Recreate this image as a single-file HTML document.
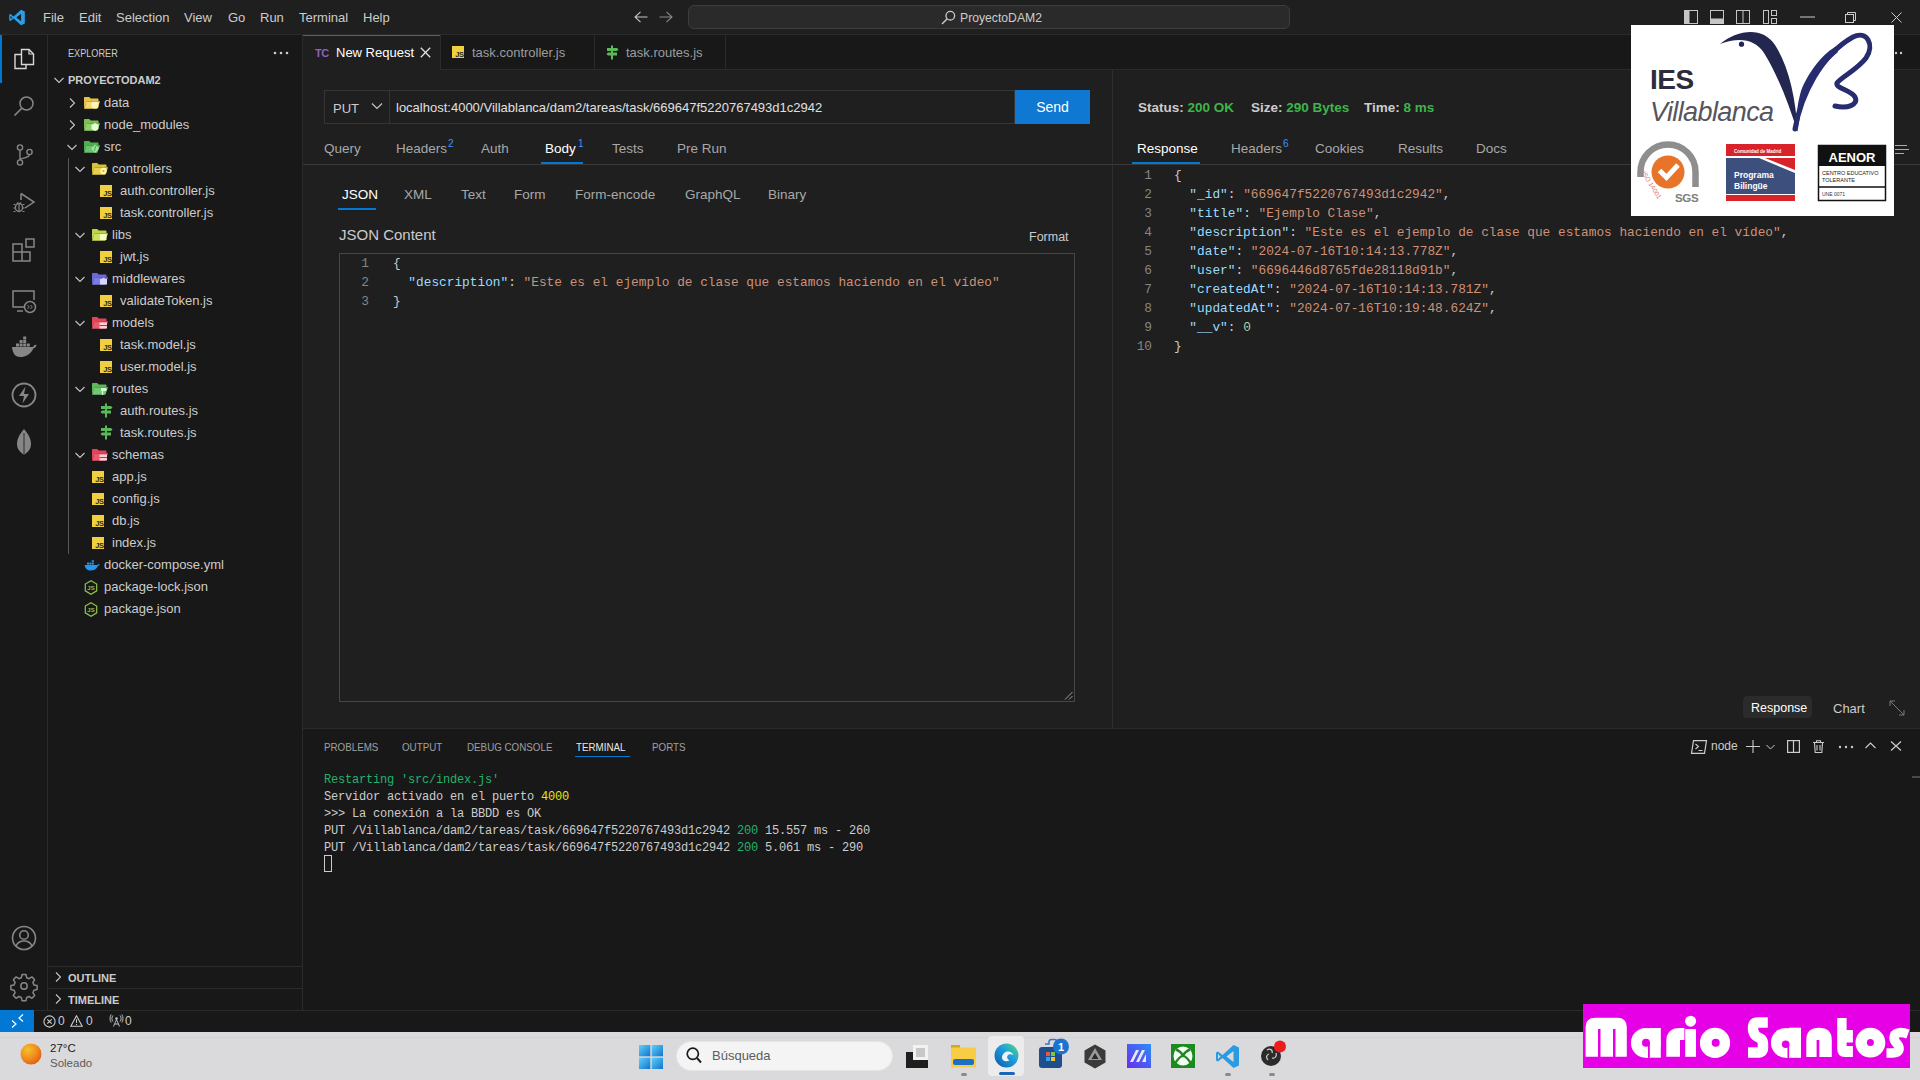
<!DOCTYPE html>
<html><head><meta charset="utf-8">
<style>
*{box-sizing:border-box;margin:0;padding:0}
html,body{width:1920px;height:1080px;overflow:hidden;background:#1f1f1f;font-family:"Liberation Sans",sans-serif;color:#cccccc}
.a{position:absolute}
.mono{font-family:"Liberation Mono",monospace}
svg{position:absolute;overflow:visible}
/* regions */
#title{left:0;top:0;width:1920px;height:35px;background:#1f1f1f;border-bottom:1px solid #2b2b2b}
#act{left:0;top:35px;width:48px;height:975px;background:#181818;border-right:1px solid #2b2b2b}
#side{left:48px;top:35px;width:255px;height:975px;background:#181818;border-right:1px solid #2b2b2b}
#tabs{left:303px;top:35px;width:1617px;height:35px;background:#181818;border-bottom:1px solid #2b2b2b}
#editor{left:303px;top:70px;width:1617px;height:658px;background:#1f1f1f}
#panel{left:303px;top:728px;width:1617px;height:282px;background:#181818;border-top:1px solid #2b2b2b}
#status{left:0;top:1010px;width:1920px;height:22px;background:#181818;border-top:1px solid #2b2b2b}
#taskbar{left:0;top:1032px;width:1920px;height:48px;background:#dadadc}
.menu{top:10px;font-size:13px;color:#cccccc;white-space:nowrap}
.row{position:absolute;left:48px;width:254px;height:22px;font-size:13px;line-height:22px;color:#cccccc;white-space:nowrap}
.row span{position:absolute;top:0}
</style></head><body>

<!-- TITLE BAR -->
<div id="title" class="a">
<svg style="left:8px;top:9px" width="18" height="17" viewBox="0 0 100 100"><path d="M74 4 L96 14 V86 L74 96 L30 56 L12 70 L4 66 V34 L12 30 L30 44 Z M74 28 L46 50 L74 72 Z M12 40 V60 L22 50 Z" fill="#2b9fe6" fill-rule="evenodd"/></svg>
<div class="a menu" style="left:43px">File</div>
<div class="a menu" style="left:79px">Edit</div>
<div class="a menu" style="left:116px">Selection</div>
<div class="a menu" style="left:184px">View</div>
<div class="a menu" style="left:228px">Go</div>
<div class="a menu" style="left:260px">Run</div>
<div class="a menu" style="left:299px">Terminal</div>
<div class="a menu" style="left:363px">Help</div>
<svg style="left:634px;top:11px" width="14" height="12" viewBox="0 0 14 12"><path d="M13.5 6H1M6.5 0.8L1 6l5.5 5.2" stroke="#c5c5c5" stroke-width="1.1" fill="none"/></svg>
<svg style="left:659px;top:11px" width="14" height="12" viewBox="0 0 14 12"><path d="M0.5 6H13M7.5 0.8L13 6l-5.5 5.2" stroke="#8a8a8a" stroke-width="1.1" fill="none"/></svg>
<div class="a" style="left:688px;top:5px;width:602px;height:24px;border-radius:6px;background:#2a2a2a;border:1px solid #3d3d3d"></div>
<svg style="left:941px;top:10px" width="15" height="15" viewBox="0 0 15 15"><circle cx="9.3" cy="5.7" r="4.3" stroke="#c8c8c8" stroke-width="1.3" fill="none"/><path d="M6.2 8.8L1 14" stroke="#c8c8c8" stroke-width="1.5"/></svg>
<div class="a" style="left:960px;top:11px;font-size:12.2px;color:#cccccc">ProyectoDAM2</div>
<svg style="left:1684px;top:10px" width="14" height="14" viewBox="0 0 14 14"><rect x="0.5" y="0.5" width="13" height="13" fill="none" stroke="#c5c5c5"/><rect x="0.5" y="0.5" width="5" height="13" fill="#c5c5c5"/></svg>
<svg style="left:1710px;top:10px" width="14" height="14" viewBox="0 0 14 14"><rect x="0.5" y="0.5" width="13" height="13" fill="none" stroke="#c5c5c5"/><rect x="0.5" y="8.5" width="13" height="5" fill="#c5c5c5"/></svg>
<svg style="left:1736px;top:10px" width="14" height="14" viewBox="0 0 14 14"><rect x="0.5" y="0.5" width="13" height="13" fill="none" stroke="#c5c5c5"/><path d="M7 0.5V13.5" stroke="#c5c5c5"/></svg>
<svg style="left:1763px;top:10px" width="14" height="14" viewBox="0 0 14 14"><rect x="0.5" y="0.5" width="5" height="13" fill="none" stroke="#c5c5c5"/><rect x="8.5" y="0.5" width="5" height="5" fill="none" stroke="#c5c5c5"/><rect x="8.5" y="8.5" width="5" height="5" fill="none" stroke="#c5c5c5"/></svg>
<svg style="left:1800px;top:16px" width="15" height="2" viewBox="0 0 15 2"><path d="M0 1H15" stroke="#cccccc" stroke-width="1"/></svg>
<svg style="left:1845px;top:12px" width="11" height="11" viewBox="0 0 11 11"><rect x="0.5" y="2.5" width="8" height="8" fill="none" stroke="#cccccc"/><path d="M2.5 2.5V0.5H10.5V8.5H8.5" fill="none" stroke="#cccccc"/></svg>
<svg style="left:1891px;top:12px" width="11" height="11" viewBox="0 0 11 11"><path d="M0.5 0.5L10.5 10.5M10.5 0.5L0.5 10.5" stroke="#cccccc" stroke-width="1"/></svg>
</div>

<!-- ACTIVITY BAR -->
<div id="act" class="a"></div>
<div class="a" style="left:0;top:35px;width:2px;height:48px;background:#0078d4"></div>
<svg style="left:12px;top:47px" width="24" height="24" viewBox="0 0 24 24"><path d="M9.5 2.5h7.5l4.5 4.5v10.5h-12z" fill="none" stroke="#d7d7d7" stroke-width="1.4"/><path d="M17 2.5v4.5h4.5" fill="none" stroke="#d7d7d7" stroke-width="1.2"/><path d="M9.5 7.5h-6.5v14h11v-4" fill="none" stroke="#d7d7d7" stroke-width="1.4"/></svg>
<svg style="left:12px;top:94px" width="24" height="24" viewBox="0 0 24 24"><circle cx="14.5" cy="9.5" r="6.5" fill="none" stroke="#868686" stroke-width="1.5"/><path d="M10 14L2.5 21.5" stroke="#868686" stroke-width="1.7"/></svg>
<svg style="left:12px;top:143px" width="24" height="24" viewBox="0 0 24 24"><circle cx="8" cy="4.5" r="2.6" fill="none" stroke="#868686" stroke-width="1.4"/><circle cx="8" cy="19.5" r="2.6" fill="none" stroke="#868686" stroke-width="1.4"/><circle cx="17.5" cy="9" r="2.6" fill="none" stroke="#868686" stroke-width="1.4"/><path d="M8 7.1V16.9M17.5 11.6c0 4-9.5 3-9.5 5.3" fill="none" stroke="#868686" stroke-width="1.4"/></svg>
<svg style="left:12px;top:190px" width="24" height="24" viewBox="0 0 24 24"><path d="M9 3.5L22 12L13 18" fill="none" stroke="#868686" stroke-width="1.5"/><path d="M9 3.5V10" stroke="#868686" stroke-width="1.5"/><ellipse cx="7" cy="17.5" rx="3.6" ry="4" fill="none" stroke="#868686" stroke-width="1.4"/><path d="M1.5 14.5h2M1.5 18h2M1.5 21.5h2M10.5 14.5h2M10.5 18h2M10.5 21.5h2M5 12.5l1 1.2M9 12.5l-1 1.2M7 14v7" stroke="#868686" stroke-width="1.2"/></svg>
<svg style="left:11px;top:237px" width="26" height="26" viewBox="0 0 26 26"><path d="M2 7h9v8h8v9H2z M2 15h9v9" fill="none" stroke="#868686" stroke-width="1.5"/><rect x="15" y="2" width="8" height="8" fill="none" stroke="#868686" stroke-width="1.5"/></svg>
<svg style="left:11px;top:288px" width="26" height="26" viewBox="0 0 26 26"><path d="M13 19H2V3h21v9" fill="none" stroke="#868686" stroke-width="1.5"/><path d="M6 23h6" stroke="#868686" stroke-width="1.5"/><circle cx="19" cy="19" r="5.5" fill="none" stroke="#868686" stroke-width="1.5"/><path d="M16.5 17l1.8 2-1.8 2M19.5 17l1.8 2-1.8 2" fill="none" stroke="#868686" stroke-width="1"/></svg>
<svg style="left:11px;top:336px" width="26" height="22" viewBox="0 0 26 22"><path d="M1 11h21c1-2 2.5-2.5 3.5-2-0.5 2-1.5 3-3 3.2C20 18 15 21 9 21 4 21 1.5 17 1 11z" fill="#868686"/><rect x="5" y="7.5" width="3" height="3" fill="#868686"/><rect x="8.6" y="7.5" width="3" height="3" fill="#868686"/><rect x="12.2" y="7.5" width="3" height="3" fill="#868686"/><rect x="8.6" y="4" width="3" height="3" fill="#868686"/><rect x="12.2" y="4" width="3" height="3" fill="#868686"/><rect x="12.2" y="0.5" width="3" height="3" fill="#868686"/><rect x="15.8" y="7.5" width="3" height="3" fill="#868686"/></svg>
<svg style="left:11px;top:382px" width="26" height="26" viewBox="0 0 26 26"><circle cx="13" cy="13" r="11.5" fill="none" stroke="#868686" stroke-width="1.8"/><path d="M14.5 4.5L8 14h5l-1.5 7.5L18 12h-5z" fill="#868686"/></svg>
<svg style="left:16px;top:429px" width="16" height="28" viewBox="0 0 16 28"><path d="M8 0C3 6 1 10 1 15c0 5 3 8 7 11 4-3 7-6 7-11C15 10 13 6 8 0z" fill="#868686"/><path d="M8 4V27" stroke="#181818" stroke-width="0.8"/></svg>
<svg style="left:11px;top:925px" width="26" height="26" viewBox="0 0 26 26"><circle cx="13" cy="13" r="11.5" fill="none" stroke="#868686" stroke-width="1.6"/><circle cx="13" cy="10" r="4.3" fill="none" stroke="#868686" stroke-width="1.6"/><path d="M5 21c1.5-3.5 4.5-5 8-5s6.5 1.5 8 5" fill="none" stroke="#868686" stroke-width="1.6"/></svg>
<svg style="left:11px;top:973px" width="26" height="26" viewBox="0 0 26 26"><path d="M11 1.5h4l0.7 3.2 2.4 1 2.8-1.8 2.8 2.8-1.8 2.8 1 2.4 3.2 0.7v4l-3.2 0.7-1 2.4 1.8 2.8-2.8 2.8-2.8-1.8-2.4 1-0.7 3.2h-4l-0.7-3.2-2.4-1-2.8 1.8-2.8-2.8 1.8-2.8-1-2.4-3.2-0.7v-4l3.2-0.7 1-2.4-1.8-2.8 2.8-2.8 2.8 1.8 2.4-1z" fill="none" stroke="#868686" stroke-width="1.5" stroke-linejoin="round"/><circle cx="13" cy="13" r="3.2" fill="none" stroke="#868686" stroke-width="1.5"/></svg>

<!-- SIDEBAR -->
<div id="side" class="a">
<div class="a" style="left:20px;top:12px;font-size:11px;color:#cccccc;transform:scaleX(0.83);transform-origin:0 0">EXPLORER</div>
<svg style="left:225px;top:16px" width="16" height="4" viewBox="0 0 16 4"><circle cx="2" cy="2" r="1.3" fill="#cccccc"/><circle cx="8" cy="2" r="1.3" fill="#cccccc"/><circle cx="14" cy="2" r="1.3" fill="#cccccc"/></svg>
</div>
<svg style="left:53px;top:74px" width="12" height="12" viewBox="0 0 12 12"><path d="M1.5 4l4.5 4.5L10.5 4" fill="none" stroke="#c5c5c5" stroke-width="1.1"/></svg>
<div class="a" style="left:68px;top:74px;font-size:11px;font-weight:bold;color:#cccccc">PROYECTODAM2</div>
<svg style="left:66px;top:97px" width="12" height="12" viewBox="0 0 12 12"><path d="M4 1.5l4.5 4.5L4 10.5" fill="none" stroke="#c5c5c5" stroke-width="1.1"/></svg>
<svg style="left:84px;top:97px" width="16" height="12" viewBox="0 0 16 12"><path d="M0 1C0 .4.4 0 1 0h4.2l1.5 1.5h6.8c.6 0 1 .4 1 1V4H3L0 11z" fill="#e5c04a"/><path d="M2.5 4.2H16L13.3 11.8H0z" fill="#f4d76a"/><ellipse cx="11" cy="6" rx="3.5" ry="1.3" fill="#fff3c0"/><path d="M7.5 6v4c0 .8 1.6 1.4 3.5 1.4s3.5-.6 3.5-1.4V6" fill="#fff3c0"/></svg>
<div class="a" style="left:104px;top:95px;font-size:13px;color:#cccccc;white-space:nowrap">data</div>
<svg style="left:66px;top:119px" width="12" height="12" viewBox="0 0 12 12"><path d="M4 1.5l4.5 4.5L4 10.5" fill="none" stroke="#c5c5c5" stroke-width="1.1"/></svg>
<svg style="left:84px;top:119px" width="16" height="12" viewBox="0 0 16 12"><path d="M0 1C0 .4.4 0 1 0h4.2l1.5 1.5h6.8c.6 0 1 .4 1 1V4H3L0 11z" fill="#7cbf58"/><path d="M2.5 4.2H16L13.3 11.8H0z" fill="#8fd06a"/><path d="M11 4l3.5 2v4L11 12 7.5 10V6z" fill="#e6ffd6"/></svg>
<div class="a" style="left:104px;top:117px;font-size:13px;color:#cccccc;white-space:nowrap">node_modules</div>
<svg style="left:66px;top:141px" width="12" height="12" viewBox="0 0 12 12"><path d="M1.5 4l4.5 4.5L10.5 4" fill="none" stroke="#c5c5c5" stroke-width="1.1"/></svg>
<svg style="left:84px;top:141px" width="16" height="12" viewBox="0 0 16 12"><path d="M0 1C0 .4.4 0 1 0h4.2l1.5 1.5h6.8c.6 0 1 .4 1 1V4H3L0 11z" fill="#4caf50"/><path d="M2.5 4.2H16L13.3 11.8H0z" fill="#6cc070"/><path d="M11 3.5l4 4-4 4.5-4-4.5z" fill="#9ae69c"/><path d="M11.5 5l-1 5" stroke="#3a8f3e" stroke-width="0.8"/></svg>
<div class="a" style="left:104px;top:139px;font-size:13px;color:#cccccc;white-space:nowrap">src</div>
<svg style="left:74px;top:163px" width="12" height="12" viewBox="0 0 12 12"><path d="M1.5 4l4.5 4.5L10.5 4" fill="none" stroke="#c5c5c5" stroke-width="1.1"/></svg>
<svg style="left:92px;top:163px" width="16" height="12" viewBox="0 0 16 12"><path d="M0 1C0 .4.4 0 1 0h4.2l1.5 1.5h6.8c.6 0 1 .4 1 1V4H3L0 11z" fill="#d9bf3a"/><path d="M2.5 4.2H16L13.3 11.8H0z" fill="#e8d04a"/><circle cx="11.5" cy="8" r="3.2" fill="#fff6b0"/><circle cx="11.5" cy="8" r="1.1" fill="#c8aa20"/></svg>
<div class="a" style="left:112px;top:161px;font-size:13px;color:#cccccc;white-space:nowrap">controllers</div>
<svg style="left:100px;top:185px" width="12" height="12" viewBox="0 0 12 12"><rect width="12" height="12" fill="#f1cf3f"/><text x="11.5" y="11.3" font-family="Liberation Sans" font-size="7.5" font-weight="bold" fill="#2a2a2a" text-anchor="end" letter-spacing="-0.4">JS</text></svg>
<div class="a" style="left:120px;top:183px;font-size:13px;color:#cccccc;white-space:nowrap">auth.controller.js</div>
<svg style="left:100px;top:207px" width="12" height="12" viewBox="0 0 12 12"><rect width="12" height="12" fill="#f1cf3f"/><text x="11.5" y="11.3" font-family="Liberation Sans" font-size="7.5" font-weight="bold" fill="#2a2a2a" text-anchor="end" letter-spacing="-0.4">JS</text></svg>
<div class="a" style="left:120px;top:205px;font-size:13px;color:#cccccc;white-space:nowrap">task.controller.js</div>
<svg style="left:74px;top:229px" width="12" height="12" viewBox="0 0 12 12"><path d="M1.5 4l4.5 4.5L10.5 4" fill="none" stroke="#c5c5c5" stroke-width="1.1"/></svg>
<svg style="left:92px;top:229px" width="16" height="12" viewBox="0 0 16 12"><path d="M0 1C0 .4.4 0 1 0h4.2l1.5 1.5h6.8c.6 0 1 .4 1 1V4H3L0 11z" fill="#bfd34a"/><path d="M2.5 4.2H16L13.3 11.8H0z" fill="#d0e060"/><rect x="8" y="5" width="6.5" height="6" fill="#f4ffc0"/></svg>
<div class="a" style="left:112px;top:227px;font-size:13px;color:#cccccc;white-space:nowrap">libs</div>
<svg style="left:100px;top:251px" width="12" height="12" viewBox="0 0 12 12"><rect width="12" height="12" fill="#f1cf3f"/><text x="11.5" y="11.3" font-family="Liberation Sans" font-size="7.5" font-weight="bold" fill="#2a2a2a" text-anchor="end" letter-spacing="-0.4">JS</text></svg>
<div class="a" style="left:120px;top:249px;font-size:13px;color:#cccccc;white-space:nowrap">jwt.js</div>
<svg style="left:74px;top:273px" width="12" height="12" viewBox="0 0 12 12"><path d="M1.5 4l4.5 4.5L10.5 4" fill="none" stroke="#c5c5c5" stroke-width="1.1"/></svg>
<svg style="left:92px;top:273px" width="16" height="12" viewBox="0 0 16 12"><path d="M0 1C0 .4.4 0 1 0h4.2l1.5 1.5h6.8c.6 0 1 .4 1 1V4H3L0 11z" fill="#6a6ad8"/><path d="M2.5 4.2H16L13.3 11.8H0z" fill="#7b7be6"/><path d="M8 6h2.2a1.3 1.3 0 0 1 2.6 0H15v5.5H8z" fill="#d8d8ff"/></svg>
<div class="a" style="left:112px;top:271px;font-size:13px;color:#cccccc;white-space:nowrap">middlewares</div>
<svg style="left:100px;top:295px" width="12" height="12" viewBox="0 0 12 12"><rect width="12" height="12" fill="#f1cf3f"/><text x="11.5" y="11.3" font-family="Liberation Sans" font-size="7.5" font-weight="bold" fill="#2a2a2a" text-anchor="end" letter-spacing="-0.4">JS</text></svg>
<div class="a" style="left:120px;top:293px;font-size:13px;color:#cccccc;white-space:nowrap">validateToken.js</div>
<svg style="left:74px;top:317px" width="12" height="12" viewBox="0 0 12 12"><path d="M1.5 4l4.5 4.5L10.5 4" fill="none" stroke="#c5c5c5" stroke-width="1.1"/></svg>
<svg style="left:92px;top:317px" width="16" height="12" viewBox="0 0 16 12"><path d="M0 1C0 .4.4 0 1 0h4.2l1.5 1.5h6.8c.6 0 1 .4 1 1V4H3L0 11z" fill="#e0455a"/><path d="M2.5 4.2H16L13.3 11.8H0z" fill="#ea5a6c"/><rect x="7.5" y="5.5" width="7.5" height="6" fill="#ffd0d8"/><path d="M7.5 8.5h7.5" stroke="#c03048" stroke-width="1"/></svg>
<div class="a" style="left:112px;top:315px;font-size:13px;color:#cccccc;white-space:nowrap">models</div>
<svg style="left:100px;top:339px" width="12" height="12" viewBox="0 0 12 12"><rect width="12" height="12" fill="#f1cf3f"/><text x="11.5" y="11.3" font-family="Liberation Sans" font-size="7.5" font-weight="bold" fill="#2a2a2a" text-anchor="end" letter-spacing="-0.4">JS</text></svg>
<div class="a" style="left:120px;top:337px;font-size:13px;color:#cccccc;white-space:nowrap">task.model.js</div>
<svg style="left:100px;top:361px" width="12" height="12" viewBox="0 0 12 12"><rect width="12" height="12" fill="#f1cf3f"/><text x="11.5" y="11.3" font-family="Liberation Sans" font-size="7.5" font-weight="bold" fill="#2a2a2a" text-anchor="end" letter-spacing="-0.4">JS</text></svg>
<div class="a" style="left:120px;top:359px;font-size:13px;color:#cccccc;white-space:nowrap">user.model.js</div>
<svg style="left:74px;top:383px" width="12" height="12" viewBox="0 0 12 12"><path d="M1.5 4l4.5 4.5L10.5 4" fill="none" stroke="#c5c5c5" stroke-width="1.1"/></svg>
<svg style="left:92px;top:383px" width="16" height="12" viewBox="0 0 16 12"><path d="M0 1C0 .4.4 0 1 0h4.2l1.5 1.5h6.8c.6 0 1 .4 1 1V4H3L0 11z" fill="#5cb85c"/><path d="M2.5 4.2H16L13.3 11.8H0z" fill="#72c872"/><path d="M9 5h4.5l1.5 1.5-1.5 1.5H9z" fill="#d8ffd8"/><path d="M10.5 5v7" stroke="#d8ffd8" stroke-width="1.3"/></svg>
<div class="a" style="left:112px;top:381px;font-size:13px;color:#cccccc;white-space:nowrap">routes</div>
<svg style="left:99px;top:403px" width="14" height="15" viewBox="0 0 14 15"><path d="M6 0.5h2v14H6z" fill="#5bb85b"/><path d="M2 3h10l1.5 1.5L12 6H2z" fill="#5bb85b"/><path d="M12 7.5H3L1.5 9 3 10.5h9z" fill="#5bb85b"/></svg>
<div class="a" style="left:120px;top:403px;font-size:13px;color:#cccccc;white-space:nowrap">auth.routes.js</div>
<svg style="left:99px;top:425px" width="14" height="15" viewBox="0 0 14 15"><path d="M6 0.5h2v14H6z" fill="#5bb85b"/><path d="M2 3h10l1.5 1.5L12 6H2z" fill="#5bb85b"/><path d="M12 7.5H3L1.5 9 3 10.5h9z" fill="#5bb85b"/></svg>
<div class="a" style="left:120px;top:425px;font-size:13px;color:#cccccc;white-space:nowrap">task.routes.js</div>
<svg style="left:74px;top:449px" width="12" height="12" viewBox="0 0 12 12"><path d="M1.5 4l4.5 4.5L10.5 4" fill="none" stroke="#c5c5c5" stroke-width="1.1"/></svg>
<svg style="left:92px;top:449px" width="16" height="12" viewBox="0 0 16 12"><path d="M0 1C0 .4.4 0 1 0h4.2l1.5 1.5h6.8c.6 0 1 .4 1 1V4H3L0 11z" fill="#e0455a"/><path d="M2.5 4.2H16L13.3 11.8H0z" fill="#ea5a6c"/><rect x="7.5" y="5.5" width="7.5" height="6" fill="#ffd0d8"/><path d="M7.5 8.5h7.5" stroke="#c03048" stroke-width="1"/></svg>
<div class="a" style="left:112px;top:447px;font-size:13px;color:#cccccc;white-space:nowrap">schemas</div>
<svg style="left:92px;top:471px" width="12" height="12" viewBox="0 0 12 12"><rect width="12" height="12" fill="#f1cf3f"/><text x="11.5" y="11.3" font-family="Liberation Sans" font-size="7.5" font-weight="bold" fill="#2a2a2a" text-anchor="end" letter-spacing="-0.4">JS</text></svg>
<div class="a" style="left:112px;top:469px;font-size:13px;color:#cccccc;white-space:nowrap">app.js</div>
<svg style="left:92px;top:493px" width="12" height="12" viewBox="0 0 12 12"><rect width="12" height="12" fill="#f1cf3f"/><text x="11.5" y="11.3" font-family="Liberation Sans" font-size="7.5" font-weight="bold" fill="#2a2a2a" text-anchor="end" letter-spacing="-0.4">JS</text></svg>
<div class="a" style="left:112px;top:491px;font-size:13px;color:#cccccc;white-space:nowrap">config.js</div>
<svg style="left:92px;top:515px" width="12" height="12" viewBox="0 0 12 12"><rect width="12" height="12" fill="#f1cf3f"/><text x="11.5" y="11.3" font-family="Liberation Sans" font-size="7.5" font-weight="bold" fill="#2a2a2a" text-anchor="end" letter-spacing="-0.4">JS</text></svg>
<div class="a" style="left:112px;top:513px;font-size:13px;color:#cccccc;white-space:nowrap">db.js</div>
<svg style="left:92px;top:537px" width="12" height="12" viewBox="0 0 12 12"><rect width="12" height="12" fill="#f1cf3f"/><text x="11.5" y="11.3" font-family="Liberation Sans" font-size="7.5" font-weight="bold" fill="#2a2a2a" text-anchor="end" letter-spacing="-0.4">JS</text></svg>
<div class="a" style="left:112px;top:535px;font-size:13px;color:#cccccc;white-space:nowrap">index.js</div>
<svg style="left:84px;top:559px" width="16" height="12" viewBox="0 0 16 12"><path d="M0.5 6h13c.6-1 1.5-1.3 2.2-1-.3 1.2-1 1.8-1.8 1.9C12.8 10 10 11.5 6.5 11.5 3 11.5 1 9.5.5 6z" fill="#2496ed"/><rect x="3" y="3.6" width="2" height="2" fill="#2496ed"/><rect x="5.4" y="3.6" width="2" height="2" fill="#2496ed"/><rect x="7.8" y="3.6" width="2" height="2" fill="#2496ed"/><rect x="7.8" y="1.2" width="2" height="2" fill="#2496ed"/></svg>
<div class="a" style="left:104px;top:557px;font-size:13px;color:#cccccc;white-space:nowrap">docker-compose.yml</div>
<svg style="left:84px;top:580px" width="14" height="15" viewBox="0 0 14 15"><path d="M7 0.8l5.7 3.3v6.7L7 14.2 1.3 10.8V4.1z" fill="none" stroke="#8cc84b" stroke-width="1.2"/><text x="7" y="10.2" font-family="Liberation Sans" font-size="6" font-weight="bold" fill="#8cc84b" text-anchor="middle">JS</text></svg>
<div class="a" style="left:104px;top:579px;font-size:13px;color:#cccccc;white-space:nowrap">package-lock.json</div>
<svg style="left:84px;top:602px" width="14" height="15" viewBox="0 0 14 15"><path d="M7 0.8l5.7 3.3v6.7L7 14.2 1.3 10.8V4.1z" fill="none" stroke="#8cc84b" stroke-width="1.2"/><text x="7" y="10.2" font-family="Liberation Sans" font-size="6" font-weight="bold" fill="#8cc84b" text-anchor="middle">JS</text></svg>
<div class="a" style="left:104px;top:601px;font-size:13px;color:#cccccc;white-space:nowrap">package.json</div>
<div class="a" style="left:68px;top:158px;width:1px;height:396px;background:#585858"></div>
<div class="a" style="left:48px;top:966px;width:254px;height:1px;background:#2b2b2b"></div>
<svg style="left:52px;top:971px" width="12" height="12" viewBox="0 0 12 12"><path d="M4 1.5l4.5 4.5L4 10.5" fill="none" stroke="#c5c5c5" stroke-width="1.1"/></svg>
<div class="a" style="left:68px;top:972px;font-size:11px;font-weight:bold;color:#cccccc">OUTLINE</div>
<div class="a" style="left:48px;top:988px;width:254px;height:1px;background:#2b2b2b"></div>
<svg style="left:52px;top:993px" width="12" height="12" viewBox="0 0 12 12"><path d="M4 1.5l4.5 4.5L4 10.5" fill="none" stroke="#c5c5c5" stroke-width="1.1"/></svg>
<div class="a" style="left:68px;top:994px;font-size:11px;font-weight:bold;color:#cccccc">TIMELINE</div>

<!-- TABS -->
<div id="tabs" class="a"></div>
<div class="a" style="left:303px;top:35px;width:137px;height:35px;background:#1f1f1f;border-top:1px solid #0078d4"></div>
<div class="a" style="left:440px;top:35px;width:1px;height:34px;background:#2b2b2b"></div>
<div class="a" style="left:594px;top:35px;width:1px;height:34px;background:#2b2b2b"></div>
<div class="a" style="left:725px;top:35px;width:1px;height:34px;background:#2b2b2b"></div>
<div class="a" style="left:315px;top:47px;font-size:11px;font-weight:bold;color:#8e5fc4;letter-spacing:-0.5px">TC</div>
<div class="a" style="left:336px;top:45px;font-size:13px;color:#ffffff">New Request</div>
<svg style="left:420px;top:47px" width="11" height="11" viewBox="0 0 11 11"><path d="M0.8 0.8L10.2 10.2M10.2 0.8L0.8 10.2" stroke="#e0e0e0" stroke-width="1.3"/></svg>
<svg style="left:452px;top:46px" width="12" height="12" viewBox="0 0 12 12"><rect width="12" height="12" fill="#f1cf3f"/><text x="11.5" y="11.3" font-family="Liberation Sans" font-size="7.5" font-weight="bold" fill="#2a2a2a" text-anchor="end" letter-spacing="-0.4">JS</text></svg>
<div class="a" style="left:472px;top:45px;font-size:13px;color:#9d9d9d">task.controller.js</div>
<svg style="left:605px;top:45px" width="14" height="15" viewBox="0 0 14 15"><path d="M6 0.5h2v14H6z" fill="#5bb85b"/><path d="M2 3h10l1.5 1.5L12 6H2z" fill="#5bb85b"/><path d="M12 7.5H3L1.5 9 3 10.5h9z" fill="#5bb85b"/></svg>
<div class="a" style="left:626px;top:45px;font-size:13px;color:#9d9d9d">task.routes.js</div>
<svg style="left:1889px;top:51px" width="14" height="4" viewBox="0 0 14 4"><circle cx="2" cy="2" r="1.2" fill="#cccccc"/><circle cx="7" cy="2" r="1.2" fill="#cccccc"/><circle cx="12" cy="2" r="1.2" fill="#cccccc"/></svg>

<!-- EDITOR (Thunder Client) -->
<div id="editor" class="a"></div>
<div class="a" style="left:324px;top:90px;width:691px;height:34px;border:1px solid #353535;background:#1f1f1f"></div>
<div class="a" style="left:389px;top:90px;width:1px;height:34px;background:#353535"></div>
<div class="a" style="left:333px;top:101px;font-size:13px;color:#cccccc">PUT</div>
<svg style="left:371px;top:102px" width="12" height="8" viewBox="0 0 12 8"><path d="M1 1.5l5 5 5-5" fill="none" stroke="#c5c5c5" stroke-width="1.2"/></svg>
<div class="a" style="left:396px;top:100px;font-size:13px;color:#e0e0e0">localhost:4000/Villablanca/dam2/tareas/task/669647f5220767493d1c2942</div>
<div class="a" style="left:1015px;top:90px;width:75px;height:34px;background:#0e78d2;color:#ffffff;font-size:14px;text-align:center;line-height:34px">Send</div>
<div class="a" style="left:324px;top:141px;font-size:13.5px;color:#a8a8a8;white-space:nowrap">Query</div>
<div class="a" style="left:396px;top:141px;font-size:13.5px;color:#a8a8a8;white-space:nowrap">Headers</div>
<div class="a" style="left:448px;top:138px;font-size:10px;color:#3794ff">2</div>
<div class="a" style="left:481px;top:141px;font-size:13.5px;color:#a8a8a8;white-space:nowrap">Auth</div>
<div class="a" style="left:545px;top:141px;font-size:13.5px;color:#ffffff;white-space:nowrap">Body</div>
<div class="a" style="left:578px;top:138px;font-size:10px;color:#3794ff">1</div>
<div class="a" style="left:612px;top:141px;font-size:13.5px;color:#a8a8a8;white-space:nowrap">Tests</div>
<div class="a" style="left:677px;top:141px;font-size:13.5px;color:#a8a8a8;white-space:nowrap">Pre Run</div>
<div class="a" style="left:303px;top:164px;width:810px;height:1px;background:#3a3a3a"></div>
<div class="a" style="left:541px;top:162px;width:42px;height:2px;background:#0078d4"></div>
<div class="a" style="left:342px;top:187px;font-size:13.5px;color:#ffffff;white-space:nowrap">JSON</div>
<div class="a" style="left:404px;top:187px;font-size:13.5px;color:#a8a8a8;white-space:nowrap">XML</div>
<div class="a" style="left:461px;top:187px;font-size:13.5px;color:#a8a8a8;white-space:nowrap">Text</div>
<div class="a" style="left:514px;top:187px;font-size:13.5px;color:#a8a8a8;white-space:nowrap">Form</div>
<div class="a" style="left:575px;top:187px;font-size:13.5px;color:#a8a8a8;white-space:nowrap">Form-encode</div>
<div class="a" style="left:685px;top:187px;font-size:13.5px;color:#a8a8a8;white-space:nowrap">GraphQL</div>
<div class="a" style="left:768px;top:187px;font-size:13.5px;color:#a8a8a8;white-space:nowrap">Binary</div>
<div class="a" style="left:338px;top:208px;width:38px;height:2px;background:#0078d4"></div>
<div class="a" style="left:339px;top:226px;font-size:15px;color:#cccccc">JSON Content</div>
<div class="a" style="left:1029px;top:230px;font-size:12.5px;color:#cccccc">Format</div>
<div class="a" style="left:339px;top:253px;width:736px;height:449px;border:1px solid #474747;background:#1f1f1f"></div>
<svg style="left:1064px;top:691px" width="9" height="9" viewBox="0 0 9 9"><path d="M8.5 1L1 8.5M8.5 5L5 8.5" stroke="#9a9a9a" stroke-width="1"/></svg>
<div class="a mono" style="left:340px;top:254px;width:29px;text-align:right;font-size:12.8px;line-height:19px;color:#858585">1</div>
<div class="a mono" style="left:393px;top:254px;font-size:12.8px;line-height:19px;white-space:pre"><span style="color:#cccccc">{</span></div>
<div class="a mono" style="left:340px;top:273px;width:29px;text-align:right;font-size:12.8px;line-height:19px;color:#858585">2</div>
<div class="a mono" style="left:393px;top:273px;font-size:12.8px;line-height:19px;white-space:pre"><span style="color:#cccccc">  </span><span style="color:#9cdcfe">"description"</span><span style="color:#cccccc">: </span><span style="color:#ce9178">"Este es el ejemplo de clase que estamos haciendo en el vídeo"</span></div>
<div class="a mono" style="left:340px;top:292px;width:29px;text-align:right;font-size:12.8px;line-height:19px;color:#858585">3</div>
<div class="a mono" style="left:393px;top:292px;font-size:12.8px;line-height:19px;white-space:pre"><span style="color:#cccccc">}</span></div>
<div class="a" style="left:1112px;top:70px;width:1px;height:658px;background:#2e2e2e"></div>
<div class="a" style="left:1138px;top:100px;font-size:13.5px;font-weight:bold;color:#cccccc;white-space:nowrap">Status: <span style="color:#3fb44a">200 OK</span></div>
<div class="a" style="left:1251px;top:100px;font-size:13.5px;font-weight:bold;color:#cccccc;white-space:nowrap">Size: <span style="color:#3fb44a">290 Bytes</span></div>
<div class="a" style="left:1364px;top:100px;font-size:13.5px;font-weight:bold;color:#cccccc;white-space:nowrap">Time: <span style="color:#3fb44a">8 ms</span></div>
<div class="a" style="left:1137px;top:141px;font-size:13.5px;color:#ffffff;white-space:nowrap">Response</div>
<div class="a" style="left:1231px;top:141px;font-size:13.5px;color:#a8a8a8;white-space:nowrap">Headers</div>
<div class="a" style="left:1283px;top:138px;font-size:10px;color:#3794ff">6</div>
<div class="a" style="left:1315px;top:141px;font-size:13.5px;color:#a8a8a8;white-space:nowrap">Cookies</div>
<div class="a" style="left:1398px;top:141px;font-size:13.5px;color:#a8a8a8;white-space:nowrap">Results</div>
<div class="a" style="left:1476px;top:141px;font-size:13.5px;color:#a8a8a8;white-space:nowrap">Docs</div>
<div class="a" style="left:1113px;top:164px;width:807px;height:1px;background:#3a3a3a"></div>
<div class="a" style="left:1132px;top:162px;width:68px;height:2px;background:#0078d4"></div>
<svg style="left:1895px;top:145px" width="14" height="10" viewBox="0 0 14 10"><path d="M0 0.5h12M0 4.5h14M0 8.5h9" stroke="#bbbbbb" stroke-width="0.9"/></svg>
<div class="a mono" style="left:1120px;top:166px;width:32px;text-align:right;font-size:12.8px;line-height:19px;color:#858585">1</div>
<div class="a mono" style="left:1174px;top:166px;font-size:12.8px;line-height:19px;white-space:pre"><span style="color:#cccccc">{</span></div>
<div class="a mono" style="left:1120px;top:185px;width:32px;text-align:right;font-size:12.8px;line-height:19px;color:#858585">2</div>
<div class="a mono" style="left:1174px;top:185px;font-size:12.8px;line-height:19px;white-space:pre"><span style="color:#cccccc">  </span><span style="color:#9cdcfe">"_id"</span><span style="color:#cccccc">: </span><span style="color:#ce9178">"669647f5220767493d1c2942"</span><span style="color:#cccccc">,</span></div>
<div class="a mono" style="left:1120px;top:204px;width:32px;text-align:right;font-size:12.8px;line-height:19px;color:#858585">3</div>
<div class="a mono" style="left:1174px;top:204px;font-size:12.8px;line-height:19px;white-space:pre"><span style="color:#cccccc">  </span><span style="color:#9cdcfe">"title"</span><span style="color:#cccccc">: </span><span style="color:#ce9178">"Ejemplo Clase"</span><span style="color:#cccccc">,</span></div>
<div class="a mono" style="left:1120px;top:223px;width:32px;text-align:right;font-size:12.8px;line-height:19px;color:#858585">4</div>
<div class="a mono" style="left:1174px;top:223px;font-size:12.8px;line-height:19px;white-space:pre"><span style="color:#cccccc">  </span><span style="color:#9cdcfe">"description"</span><span style="color:#cccccc">: </span><span style="color:#ce9178">"Este es el ejemplo de clase que estamos haciendo en el vídeo"</span><span style="color:#cccccc">,</span></div>
<div class="a mono" style="left:1120px;top:242px;width:32px;text-align:right;font-size:12.8px;line-height:19px;color:#858585">5</div>
<div class="a mono" style="left:1174px;top:242px;font-size:12.8px;line-height:19px;white-space:pre"><span style="color:#cccccc">  </span><span style="color:#9cdcfe">"date"</span><span style="color:#cccccc">: </span><span style="color:#ce9178">"2024-07-16T10:14:13.778Z"</span><span style="color:#cccccc">,</span></div>
<div class="a mono" style="left:1120px;top:261px;width:32px;text-align:right;font-size:12.8px;line-height:19px;color:#858585">6</div>
<div class="a mono" style="left:1174px;top:261px;font-size:12.8px;line-height:19px;white-space:pre"><span style="color:#cccccc">  </span><span style="color:#9cdcfe">"user"</span><span style="color:#cccccc">: </span><span style="color:#ce9178">"6696446d8765fde28118d91b"</span><span style="color:#cccccc">,</span></div>
<div class="a mono" style="left:1120px;top:280px;width:32px;text-align:right;font-size:12.8px;line-height:19px;color:#858585">7</div>
<div class="a mono" style="left:1174px;top:280px;font-size:12.8px;line-height:19px;white-space:pre"><span style="color:#cccccc">  </span><span style="color:#9cdcfe">"createdAt"</span><span style="color:#cccccc">: </span><span style="color:#ce9178">"2024-07-16T10:14:13.781Z"</span><span style="color:#cccccc">,</span></div>
<div class="a mono" style="left:1120px;top:299px;width:32px;text-align:right;font-size:12.8px;line-height:19px;color:#858585">8</div>
<div class="a mono" style="left:1174px;top:299px;font-size:12.8px;line-height:19px;white-space:pre"><span style="color:#cccccc">  </span><span style="color:#9cdcfe">"updatedAt"</span><span style="color:#cccccc">: </span><span style="color:#ce9178">"2024-07-16T10:19:48.624Z"</span><span style="color:#cccccc">,</span></div>
<div class="a mono" style="left:1120px;top:318px;width:32px;text-align:right;font-size:12.8px;line-height:19px;color:#858585">9</div>
<div class="a mono" style="left:1174px;top:318px;font-size:12.8px;line-height:19px;white-space:pre"><span style="color:#cccccc">  </span><span style="color:#9cdcfe">"__v"</span><span style="color:#cccccc">: </span><span style="color:#b5cea8">0</span></div>
<div class="a mono" style="left:1120px;top:337px;width:32px;text-align:right;font-size:12.8px;line-height:19px;color:#858585">10</div>
<div class="a mono" style="left:1174px;top:337px;font-size:12.8px;line-height:19px;white-space:pre"><span style="color:#cccccc">}</span></div>
<div class="a" style="left:1743px;top:696px;width:69px;height:22px;border-radius:4px;background:#2b2b2b"></div>
<div class="a" style="left:1751px;top:701px;font-size:12.5px;color:#ffffff">Response</div>
<div class="a" style="left:1833px;top:701px;font-size:13px;color:#cccccc">Chart</div>
<svg style="left:1889px;top:700px" width="16" height="16" viewBox="0 0 16 16"><path d="M1 1L15 15M1 1h5M1 1v5M15 15h-5M15 15v-5" fill="none" stroke="#7a7a7a" stroke-width="1"/></svg>

<!-- PANEL -->
<div id="panel" class="a"></div>
<div class="a" style="left:324px;top:741px;font-size:11px;color:#a0a0a0;white-space:nowrap;transform:scaleX(0.89);transform-origin:0 0">PROBLEMS</div>
<div class="a" style="left:402px;top:741px;font-size:11px;color:#a0a0a0;white-space:nowrap;transform:scaleX(0.89);transform-origin:0 0">OUTPUT</div>
<div class="a" style="left:467px;top:741px;font-size:11px;color:#a0a0a0;white-space:nowrap;transform:scaleX(0.89);transform-origin:0 0">DEBUG CONSOLE</div>
<div class="a" style="left:576px;top:741px;font-size:11px;color:#e7e7e7;white-space:nowrap;transform:scaleX(0.89);transform-origin:0 0">TERMINAL</div>
<div class="a" style="left:652px;top:741px;font-size:11px;color:#a0a0a0;white-space:nowrap;transform:scaleX(0.89);transform-origin:0 0">PORTS</div>
<div class="a" style="left:575px;top:756px;width:55px;height:1px;background:#0078d4"></div>
<svg style="left:1691px;top:740px" width="16" height="14" viewBox="0 0 16 14"><path d="M2.5 0.7h13l-2 12.6h-13z" fill="none" stroke="#cccccc" stroke-width="1.2"/><path d="M4.5 4l3 2.5-3 2.5M7.5 10.5h4" fill="none" stroke="#cccccc" stroke-width="1.1"/></svg>
<div class="a" style="left:1711px;top:739px;font-size:12px;color:#cccccc">node</div>
<svg style="left:1746px;top:740px" width="14" height="13" viewBox="0 0 14 13"><path d="M0 6.5h14M7 0v13" stroke="#cccccc" stroke-width="1.1"/></svg>
<svg style="left:1766px;top:744px" width="9" height="6" viewBox="0 0 9 6"><path d="M0.5 1l4 4 4-4" fill="none" stroke="#cccccc" stroke-width="1"/></svg>
<svg style="left:1787px;top:740px" width="13" height="13" viewBox="0 0 13 13"><rect x="0.6" y="0.6" width="11.8" height="11.8" fill="none" stroke="#cccccc" stroke-width="1.2"/><path d="M6.5 0.6v11.8" stroke="#cccccc" stroke-width="1.2"/></svg>
<svg style="left:1813px;top:740px" width="11" height="13" viewBox="0 0 11 13"><path d="M0 2.5h11M3.5 2.5V0.8h4v1.7M1.5 2.5l0.7 10h6.6l0.7-10M4 5v5.5M7 5v5.5" fill="none" stroke="#cccccc" stroke-width="1.1"/></svg>
<svg style="left:1838px;top:745px" width="16" height="4" viewBox="0 0 16 4"><circle cx="2" cy="2" r="1.2" fill="#cccccc"/><circle cx="8" cy="2" r="1.2" fill="#cccccc"/><circle cx="14" cy="2" r="1.2" fill="#cccccc"/></svg>
<svg style="left:1865px;top:742px" width="11" height="7" viewBox="0 0 11 7"><path d="M0.5 6l5-5 5 5" fill="none" stroke="#cccccc" stroke-width="1.1"/></svg>
<svg style="left:1890px;top:741px" width="12" height="10" viewBox="0 0 12 10"><path d="M1 0.5l10 9M11 0.5l-10 9" stroke="#cccccc" stroke-width="1.2"/></svg>
<div class="a mono" style="left:324px;top:772px;font-size:12px;line-height:17px;letter-spacing:-0.2px;white-space:pre"><span style="color:#23b26d">Restarting 'src/index.js'</span></div>
<div class="a mono" style="left:324px;top:789px;font-size:12px;line-height:17px;letter-spacing:-0.2px;white-space:pre"><span style="color:#cccccc">Servidor activado en el puerto </span><span style="color:#e5e510">4000</span></div>
<div class="a mono" style="left:324px;top:806px;font-size:12px;line-height:17px;letter-spacing:-0.2px;white-space:pre"><span style="color:#cccccc">&gt;&gt;&gt; La conexión a la BBDD es OK</span></div>
<div class="a mono" style="left:324px;top:823px;font-size:12px;line-height:17px;letter-spacing:-0.2px;white-space:pre"><span style="color:#cccccc">PUT /Villablanca/dam2/tareas/task/669647f5220767493d1c2942 </span><span style="color:#23b26d">200</span><span style="color:#cccccc"> 15.557 ms - 260</span></div>
<div class="a mono" style="left:324px;top:840px;font-size:12px;line-height:17px;letter-spacing:-0.2px;white-space:pre"><span style="color:#cccccc">PUT /Villablanca/dam2/tareas/task/669647f5220767493d1c2942 </span><span style="color:#23b26d">200</span><span style="color:#cccccc"> 5.061 ms - 290</span></div>
<div class="a" style="left:324px;top:855px;width:8px;height:17px;border:1px solid #cccccc"></div>

<!-- STATUS BAR -->
<div id="status" class="a"></div>
<div class="a" style="left:0;top:1010px;width:34px;height:22px;background:#0078d4"></div>
<svg style="left:11px;top:1014px" width="13" height="14" viewBox="0 0 13 14"><path d="M1 6.5l4 3.5-4 3.5M12 0.5l-4 3.5 4 3.5" fill="none" stroke="#ffffff" stroke-width="1.2"/></svg>
<svg style="left:43px;top:1015px" width="13" height="13" viewBox="0 0 13 13"><circle cx="6.5" cy="6.5" r="5.6" fill="none" stroke="#cccccc" stroke-width="1.1"/><path d="M4.3 4.3l4.4 4.4M8.7 4.3l-4.4 4.4" stroke="#cccccc" stroke-width="1.1"/></svg>
<div class="a" style="left:58px;top:1014px;font-size:12px;color:#cccccc">0</div>
<svg style="left:70px;top:1015px" width="13" height="12" viewBox="0 0 13 12"><path d="M6.5 0.8L12.2 11.3H0.8z" fill="none" stroke="#cccccc" stroke-width="1.1"/><path d="M6.5 4.2v3.8M6.5 9v1" stroke="#cccccc" stroke-width="1.1"/></svg>
<div class="a" style="left:86px;top:1014px;font-size:12px;color:#cccccc">0</div>
<svg style="left:110px;top:1014px" width="13" height="13" viewBox="0 0 13 13"><circle cx="6.5" cy="4.5" r="1.2" fill="#cccccc"/><path d="M6.5 5.5L3.5 12.5M6.5 5.5l3 7M4.5 10h4M3 1.5c-1.5 1.5-1.5 4.5 0 6M10 1.5c1.5 1.5 1.5 4.5 0 6M1.2 0.5c-1.6 2.5-1.6 5.5 0 8M11.8 0.5c1.6 2.5 1.6 5.5 0 8" fill="none" stroke="#cccccc" stroke-width="0.9"/></svg>
<div class="a" style="left:125px;top:1014px;font-size:12px;color:#cccccc">0</div>

<!-- TASKBAR -->
<div id="taskbar" class="a"></div>
<div class="a" style="left:0;top:1037px;width:1920px;height:1px;background:#d3d3d5"></div>
<svg style="left:19px;top:1042px" width="24" height="24" viewBox="0 0 24 24"><defs><radialGradient id="sun" cx="35%" cy="30%" r="75%"><stop offset="0" stop-color="#f5c02a"/><stop offset="0.6" stop-color="#f08a1c"/><stop offset="1" stop-color="#e35c10"/></radialGradient></defs><circle cx="12" cy="12" r="10.5" fill="url(#sun)"/></svg>
<div class="a" style="left:50px;top:1042px;font-size:11.5px;color:#1b1b1b">27°C</div>
<div class="a" style="left:50px;top:1057px;font-size:11.5px;color:#5a5a5a">Soleado</div>
<svg style="left:639px;top:1045px" width="24" height="24" viewBox="0 0 24 24"><defs><linearGradient id="win" x1="0" y1="0" x2="1" y2="1"><stop offset="0" stop-color="#5fd0f8"/><stop offset="1" stop-color="#1273cf"/></linearGradient></defs><rect x="0" y="0" width="11.3" height="11.3" fill="url(#win)"/><rect x="12.7" y="0" width="11.3" height="11.3" fill="url(#win)"/><rect x="0" y="12.7" width="11.3" height="11.3" fill="url(#win)"/><rect x="12.7" y="12.7" width="11.3" height="11.3" fill="url(#win)"/></svg>
<div class="a" style="left:676px;top:1041px;width:217px;height:30px;border-radius:15px;background:#f4f4f4;border:1px solid #e6e6e6"></div>
<svg style="left:686px;top:1047px" width="16" height="17" viewBox="0 0 16 17"><circle cx="6.8" cy="6.8" r="5.6" fill="none" stroke="#1b1b1b" stroke-width="1.7"/><path d="M11 11l4 4.5" stroke="#1b1b1b" stroke-width="1.9"/></svg>
<div class="a" style="left:712px;top:1048px;font-size:13px;color:#5c5c5c">Búsqueda</div>
<svg style="left:906px;top:1045px" width="23" height="23" viewBox="0 0 23 23"><rect x="7" y="0" width="15" height="15" fill="#f2f2f2"/><rect x="10" y="3" width="9" height="9" fill="#c8c8c8"/><path d="M0 7h7v8h15v8H0z" fill="#1e1e1e"/></svg>
<svg style="left:951px;top:1045px" width="25" height="23" viewBox="0 0 25 23"><rect x="0" y="0" width="9" height="4" fill="#d9a520"/><rect x="0" y="2.5" width="25" height="20" rx="1" fill="#f7cd45"/><rect x="2" y="14" width="21" height="6" rx="2" fill="#1d6fc4"/></svg>
<div class="a" style="left:961px;top:1073px;width:6px;height:3px;border-radius:2px;background:#8a8a8a"></div>
<div class="a" style="left:988px;top:1036px;width:36px;height:40px;border-radius:4px;background:#ececec"></div>
<svg style="left:994px;top:1043px" width="25" height="25" viewBox="0 0 25 25"><defs><linearGradient id="edg" x1="0" y1="1" x2="1" y2="0"><stop offset="0" stop-color="#0c59a4"/><stop offset="0.55" stop-color="#1e9bde"/><stop offset="1" stop-color="#50e07a"/></linearGradient></defs><circle cx="12.5" cy="12.5" r="12" fill="url(#edg)"/><path d="M8 15c0-4 3-6.5 6-6.5 2.5 0 4.5 1.5 5.5 3.5-1.5-.8-3.5-1-5-.2C12.5 13 12.7 16 15.5 17.5 12 19 8 18 8 15z" fill="#ffffff" opacity="0.9"/></svg>
<div class="a" style="left:999px;top:1072px;width:16px;height:3px;border-radius:2px;background:#1a67b8"></div>
<svg style="left:1039px;top:1038px" width="32" height="31" viewBox="0 0 32 31"><path d="M6 6h4v-2c0-1.5 1-2.5 2.5-2.5h3C17 1.5 18 2.5 18 4v2h0" fill="none" stroke="#3a76c4" stroke-width="1.5"/><rect x="0" y="9" width="23" height="21" rx="3" fill="#1f4e8c"/><rect x="7" y="14" width="4" height="4" fill="#e8573b"/><rect x="12" y="14" width="4" height="4" fill="#7cc73f"/><rect x="7" y="19" width="4" height="4" fill="#2aa3ee"/><rect x="12" y="19" width="4" height="4" fill="#f7c129"/><circle cx="22" cy="8.5" r="8" fill="#1c72d0"/><text x="22" y="13" font-family="Liberation Sans" font-size="11" font-weight="bold" fill="#fff" text-anchor="middle">1</text></svg>
<svg style="left:1084px;top:1044px" width="22" height="25" viewBox="0 0 22 25"><path d="M11 0.5L21.5 6.5v12L11 24.5 0.5 18.5v-12z" fill="#3a3a3a"/><path d="M11 4L18 16H4z" fill="#9a9a9a"/><path d="M11 9l3.5 6H7.5z" fill="#2a2a2a"/></svg>
<svg style="left:1127px;top:1044px" width="24" height="24" viewBox="0 0 24 24"><defs><linearGradient id="mm" x1="0" y1="1" x2="1" y2="0"><stop offset="0" stop-color="#6a2cf0"/><stop offset="1" stop-color="#2a8ef5"/></linearGradient></defs><rect width="24" height="24" fill="url(#mm)"/><path d="M3 18L9 6h3L6 18zM9 18l6-12h3l-6 12zM15 18l4-8v8z" fill="#e8e8ff"/></svg>
<svg style="left:1171px;top:1044px" width="24" height="24" viewBox="0 0 24 24"><rect width="24" height="24" fill="#1d8a20"/><circle cx="12" cy="12" r="9.5" fill="#f4fff4"/><path d="M5 5.5c3 1 5.5 3.5 7 6 1.5-2.5 4-5 7-6M4.5 19c2-3.5 5-6.5 7.5-7.5 2.5 1 5.5 4 7.5 7.5" fill="none" stroke="#1d8a20" stroke-width="2.4"/></svg>
<svg style="left:1215px;top:1044px" width="25" height="25" viewBox="0 0 100 100"><path d="M74 4 L96 14 V86 L74 96 L30 56 L12 70 L4 66 V34 L12 30 L30 44 Z M74 28 L46 50 L74 72 Z M12 40 V60 L22 50 Z" fill="#2a9be0" fill-rule="evenodd"/></svg>
<div class="a" style="left:1225px;top:1073px;width:6px;height:3px;border-radius:2px;background:#8a8a8a"></div>
<svg style="left:1260px;top:1040px" width="28" height="27" viewBox="0 0 28 27"><circle cx="11" cy="16" r="10" fill="#2b2b2b"/><path d="M7 10c3-2 6 0 5 3M16 13c1 3-1 6-4 5M8 20c-2-2-2-5 1-6" fill="none" stroke="#d0d0d0" stroke-width="1.2"/><circle cx="20" cy="6.5" r="6" fill="#ee1c1c"/></svg>
<div class="a" style="left:1269px;top:1073px;width:6px;height:3px;border-radius:2px;background:#8a8a8a"></div>

<div class="a" style="left:1631px;top:25px;width:263px;height:191px;background:#ffffff"></div>
<svg style="left:1631px;top:25px" width="263" height="191" viewBox="0 0 263 191">
<text x="19" y="64" font-family="Liberation Sans" font-size="28" font-weight="bold" fill="#2c2d3c" letter-spacing="-0.5">IES</text>
<text x="19" y="96" font-family="Liberation Sans" font-size="27" font-style="italic" fill="#55555c" letter-spacing="-0.6">Villablanca</text>
<path d="M89 19 C108 4 132 2 144 20 C157 40 165 72 166.5 107 C157 76 145 47 133 28 C124 14 108 12 89 19 Z" fill="#23264f"/>
<circle cx="110.5" cy="19.2" r="2.6" fill="#23264f"/>
<path d="M164 104 C170 70 190 30 222 12 C236 5 244 20 235 33 C226 45 210 52 206 58 C204 63 220 65 224 72 C228 80 216 84 204 81" fill="none" stroke="#272c6e" stroke-width="5" stroke-linecap="round"/>
<path d="M166.5 107 C165 92 166 80 170 66 C176 50 190 30 204 22 L207 27 C193 38 180 56 174 72 C170 84 168 95 166.5 107Z" fill="#272c6e"/>
<!-- SGS -->
<path d="M9.5 152 V147 A27.5 27.5 0 0 1 64.5 147 V162" fill="none" stroke="#8e8e8e" stroke-width="6.5"/>
<circle cx="37" cy="147" r="16.5" fill="#e8742a"/>
<path d="M28.5 145.5l7 7 11.5-12.5" fill="none" stroke="#ffffff" stroke-width="5"/>
<text x="44" y="177" font-family="Liberation Sans" font-size="11.5" font-weight="bold" fill="#7d7d7d" letter-spacing="-0.3">SGS</text>
<text x="6" y="150" font-family="Liberation Sans" font-size="6.5" fill="#e27070" transform="rotate(58 10 153)">ISO 14001</text>
<!-- Programa Bilingue -->
<rect x="95" y="119" width="69" height="56" fill="#ffffff"/>
<rect x="95" y="119" width="69" height="12" fill="#d8232a"/>
<rect x="95" y="133" width="69" height="36" fill="#3d4f7c"/>
<path d="M133 133h31v14z" fill="#d8232a"/>
<path d="M128 133h6l30 12v3z" fill="#ffffff"/>
<rect x="95" y="170" width="69" height="6" fill="#d8232a"/>
<text x="103" y="153" font-family="Liberation Sans" font-size="8.5" font-weight="bold" fill="#ffffff">Programa</text>
<text x="103" y="164" font-family="Liberation Sans" font-size="8.5" font-weight="bold" fill="#ffffff">Bilingüe</text>
<text x="103" y="128" font-family="Liberation Sans" font-size="4.5" font-weight="bold" fill="#ffffff">Comunidad de Madrid</text>
<!-- AENOR -->
<rect x="187.5" y="120.5" width="67" height="55" fill="#ffffff" stroke="#111" stroke-width="1.5"/>
<rect x="187" y="120" width="68" height="21" fill="#111111"/>
<text x="221" y="137" font-family="Liberation Sans" font-size="13" font-weight="bold" fill="#ffffff" text-anchor="middle">AENOR</text>
<text x="191" y="150" font-family="Liberation Sans" font-size="5.5" fill="#222">CENTRO EDUCATIVO</text>
<text x="191" y="157" font-family="Liberation Sans" font-size="5.5" fill="#222">TOLERANTE</text>
<path d="M187 162h68" stroke="#111" stroke-width="1.5"/>
<text x="191" y="171" font-family="Liberation Sans" font-size="5" fill="#333">UNE 0071</text>
</svg>
<div class="a" style="left:1583px;top:1004px;width:327px;height:64px;background:#e500e5"></div>
<svg style="left:1583px;top:1004px" width="327" height="64" viewBox="0 0 327 64">
<g fill="#ffffff">
<path d="M2.6 52.8V23.2Q2.6 13.7 12.1 13.7H34.3Q43.8 13.7 43.8 23.2V52.8Z"/>
<circle cx="62.9" cy="38.9" r="14.9"/><rect x="62.9" y="38.9" width="14.9" height="14.8"/><rect x="66" y="24" width="11.8" height="15"/>
<path d="M83.3 52.8V37.5Q83.3 24 96.8 24H101.4V36H97V52.8Z"/>
<rect x="102.2" y="25" width="10.8" height="27.8"/><circle cx="107.6" cy="17.2" r="5.5"/>
<circle cx="132" cy="38.9" r="15.1"/>
<path d="M184.8 18.6H175C170 18.6 170 21 170 25C170 30.5 173 32.5 176.5 34C180 35.5 180 38 180 43C180 48.6 177 48.6 174 48.6H165" fill="none" stroke="#ffffff" stroke-width="10.5"/>
<circle cx="202.8" cy="38.8" r="14.9"/><rect x="202.8" y="38.8" width="15.2" height="15"/><rect x="206" y="23.7" width="12" height="15"/>
<path d="M223.3 52.9V36Q223.3 23.7 236 23.7Q248.8 23.7 248.8 36V52.9Z"/>
<path d="M254.2 13.9H263.6V26H269.9V38.5H263.6V42H269.9V52.9H262Q254.2 52.9 254.2 45Z"/>
<circle cx="287.4" cy="38.7" r="14.9"/>
<path d="M325 30C318 27.5 311 28 311 34C311 39 317 40 316 45.5C315 49.5 309 49 303.5 49" fill="none" stroke="#ffffff" stroke-width="9.5"/>
</g>
<g fill="#e500e5">
<rect x="15" y="25" width="2.5" height="28"/><rect x="30" y="25" width="2.5" height="28"/>
<circle cx="63" cy="38.7" r="4"/><rect x="65" y="38.7" width="1.8" height="15.2"/>
<circle cx="132.7" cy="38.7" r="4"/>
<circle cx="202.7" cy="40.3" r="3.8"/><rect x="204.5" y="40.3" width="1.6" height="13.8"/>
<rect x="233.6" y="36" width="2.7" height="17"/>
<circle cx="287.4" cy="38.5" r="3.5"/>
</g>
</svg>
<div class="a" style="left:1912px;top:776px;width:8px;height:2px;background:#4a4a4a"></div>
</body></html>
